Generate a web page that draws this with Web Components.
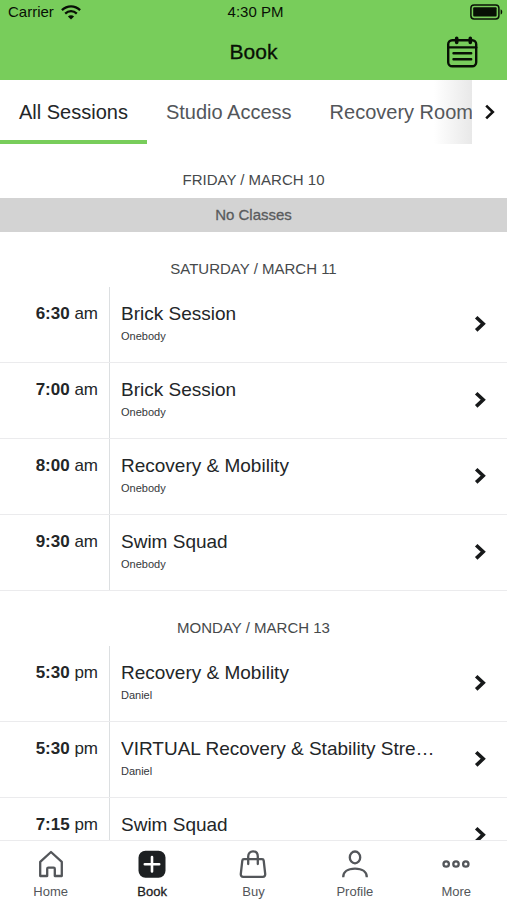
<!DOCTYPE html>
<html lang="en">
<head>
<meta charset="utf-8">
<meta name="viewport" content="width=device-width, initial-scale=1">
<title>Book</title>
<style>
html, body { height: 100%; }
body { margin: 0; background: #fff; color: #232628; font-family: "Liberation Sans", Arial, sans-serif; --brand: #78cd5b; --muted: #53565a; --line: #ebebed; }
</style>
</head>
<body>
<booking-app>
  <status-bar slot="top" carrier="Carrier" time="4:30 PM"></status-bar>
  <title-bar slot="top">Book</title-bar>
  <session-tabs slot="top">
    <session-tab selected>All Sessions</session-tab>
    <session-tab>Studio Access</session-tab>
    <session-tab>Recovery Room</session-tab>
  </session-tabs>
  <day-group date="FRIDAY / MARCH 10"><empty-day>No Classes</empty-day></day-group>
  <day-group date="SATURDAY / MARCH 11">
    <class-row time="6:30" period="am" coach="Onebody">Brick Session</class-row>
    <class-row time="7:00" period="am" coach="Onebody">Brick Session</class-row>
    <class-row time="8:00" period="am" coach="Onebody">Recovery &amp; Mobility</class-row>
    <class-row time="9:30" period="am" coach="Onebody">Swim Squad</class-row>
  </day-group>
  <day-group date="MONDAY / MARCH 13">
    <class-row time="5:30" period="pm" coach="Daniel">Recovery &amp; Mobility</class-row>
    <class-row time="5:30" period="pm" coach="Daniel">VIRTUAL Recovery &amp; Stability Stre…</class-row>
    <class-row time="7:15" period="pm" coach="Daniel">Swim Squad</class-row>
  </day-group>
  <bottom-nav slot="bottom">
    <nav-item icon="home">Home</nav-item>
    <nav-item icon="book" selected>Book</nav-item>
    <nav-item icon="buy">Buy</nav-item>
    <nav-item icon="profile">Profile</nav-item>
    <nav-item icon="more">More</nav-item>
  </bottom-nav>
</booking-app>
<script>
const BASE = `<style>
*{box-sizing:border-box}
:host{display:block}
svg{display:block;flex:none}
a{color:inherit;text-decoration:none}
button{font:inherit;color:inherit;border:0;background:none;padding:0;margin:0}
</style>`;
function element(name, render) {
  customElements.define(name, class extends HTMLElement {
    constructor() {
      super();
      this.attachShadow({ mode: 'open' });
    }
    connectedCallback() {
      this.shadowRoot.innerHTML = BASE + render(this);
    }
  });
}

element('booking-app', () => `<style>
:host{display:flex;flex-direction:column;height:100vh;overflow:hidden}
main{flex:1;min-height:0;overflow:hidden}
</style><slot name="top"></slot><main><slot></slot></main><slot name="bottom"></slot>`);

element('status-bar', el => `<style>
:host{background:var(--brand);color:#081005}
div{display:grid;grid-template-columns:1fr auto 1fr;align-items:center;height:24px;padding:0 4px 0 8px;font-size:15px;line-height:24px}
.left{display:flex;align-items:center;gap:7px}
.battery{justify-self:end}
</style><div>
<span class="left"><span>${el.getAttribute('carrier')}</span>
<svg width="20" height="15" viewBox="0 0 20 15" fill="none" stroke="currentColor" stroke-width="2.3" aria-hidden="true"><path d="M.9 5.2C6.2.1 13.8.1 19.1 5.2"/><path d="M4.2 8.6c3.4-3.2 8.2-3.2 11.6 0"/><path d="M6.9 11.4c1.8-1.7 4.4-1.7 6.2 0L10 14.6z" fill="currentColor" stroke="none"/></svg></span>
<span>${el.getAttribute('time')}</span>
<svg class="battery" width="33" height="16" viewBox="0 0 33 16" aria-hidden="true"><rect x=".9" y=".9" width="28" height="14" rx="3.2" fill="none" stroke="currentColor" stroke-width="1.5"/><rect x="3.2" y="3.2" width="23.4" height="9.4" rx="1" fill="currentColor"/><path d="M30.6 5.2c2.2.6 2.2 4.8 0 5.4z" fill="currentColor"/></svg>
</div>`);

element('title-bar', () => `<style>
:host{background:var(--brand);color:#081005}
header{display:grid;grid-template-columns:1fr auto 1fr;align-items:center;height:56px;padding:0 29px}
h1{margin:0;font-size:21px;line-height:28px;font-weight:400;-webkit-text-stroke:.3px currentColor}
button{justify-self:end}
</style><header><span></span><h1><slot></slot></h1>
<button type="button" aria-label="Calendar"><svg width="32" height="32" viewBox="0 0 32 32" fill="none" stroke="currentColor" stroke-width="2.4" stroke-linecap="round"><rect x="2.2" y="4.3" width="28" height="26" rx="4"/><path d="M2.2 11.4h28"/><path d="M10.7 2.200v4.200M24.300 2.200v4.200" stroke-width="3.600"/><path d="M7.500 17.200h17.700M7.500 23.200h17.700"/></svg></button></header>`);

element('session-tabs', () => `<style>
nav{display:flex;height:64px;background:#fff}
.strip{position:relative;display:flex;flex:1;min-width:0;overflow:hidden}
.strip::after{content:"";position:absolute;top:0;right:0;bottom:0;width:38px;background:linear-gradient(to right,rgba(120,120,120,0),rgba(120,120,120,.17));pointer-events:none}
button{display:flex;align-items:center;justify-content:center;width:35px;color:#111}
</style><nav aria-label="Session types"><div class="strip"><slot></slot></div>
<button type="button" aria-label="More session types"><svg width="12" height="16" viewBox="0 0 12 16" fill="none" stroke="currentColor" stroke-width="2.6"><path d="M2.2 1.6 8.8 8l-6.6 6.4"/></svg></button></nav>`);

element('session-tab', () => `<style>
:host{flex:none}
a{display:block;height:64px;padding:0 19px;font-size:20px;line-height:64px;white-space:nowrap;color:var(--muted)}
:host([selected]) a{color:#232628;border-bottom:4px solid var(--brand)}
</style><a href="#sessions"><slot></slot></a>`);

element('day-group', el => `<style>
section{padding-top:1px}
:host(:first-child) section,:host([date^="FRIDAY"]) section{padding-top:0}
h2{margin:0;height:54px;padding-top:8px;text-align:center;font-size:15px;line-height:56px;font-weight:400;color:#46494b}
</style><section><h2>${el.getAttribute('date')}</h2><slot></slot></section>`);

element('empty-day', () => `<style>
p{margin:0;height:34px;background:#d3d3d3;text-align:center;font-size:15px;line-height:34px;color:#595b5d;-webkit-text-stroke:.3px currentColor}
</style><p><slot></slot></p>`);

element('class-row', el => `<style>
a{display:flex;height:76px;border-bottom:1px solid var(--line)}
.time{width:110px;padding:15px 11px 0 0;border-right:1px solid #dcdfe1;text-align:right;font-size:17px;line-height:24px;white-space:nowrap}
.info{flex:1;min-width:0;padding:15px 0 0 11px}
h3{margin:0;font-size:19px;line-height:24px;font-weight:400;white-space:nowrap;overflow:hidden;text-overflow:ellipsis}
p{margin:2px 0 0;font-size:11px;line-height:16px;color:#34373a}
svg{margin:28px 20px 0}
</style><a href="#class"><span class="time"><b>${el.getAttribute('time')}</b> ${el.getAttribute('period')}</span>
<div class="info"><h3><slot></slot></h3><p>${el.getAttribute('coach')}</p></div>
<svg width="13" height="18" viewBox="0 0 13 18" fill="none" stroke="#17191a" stroke-width="3.6" aria-hidden="true"><path d="M2.2 2.2 9.2 8.8l-7 6.6"/></svg></a>`);

element('bottom-nav', () => `<style>
nav{display:grid;grid-template-columns:repeat(5,1fr);height:60px;background:#fff;border-top:1px solid var(--line)}
</style><nav aria-label="Main"><slot></slot></nav>`);

const ICONS = {
  home: '<path d="M4.2 27V12.8L15 3l10.8 9.8V27h-7v-7.2c0-.7-.5-1.2-1.2-1.2h-5.200c-.7 0-1.200.5-1.200 1.200V27z"/>',
  book: '<rect x="1.500" y="1.700" width="27" height="27" rx="7" fill="#1d2022" stroke="none"/><path d="M15 8v14.400M7.800 15.200h14.400" stroke="#fff" stroke-width="2.600" stroke-linecap="round"/>',
  buy: '<path d="M5.900 10.200h18.200c.9 0 1.500.5 1.600 1.400l1.500 13.200c.2 1.800-.7 3-2.400 3H5.200c-1.700 0-2.600-1.200-2.400-3l1.500-13.200c.1-.9.7-1.400 1.600-1.400z"/><path d="M10.200 15V7.500C10.200 4.300 12.200 2.300 15 2.300s4.800 2 4.800 5.200V15" stroke-linecap="round"/>',
  profile: '<ellipse cx="15" cy="8.400" rx="5.200" ry="5.900"/><path d="M3.200 28.200c0-5.200 4.400-8.600 11.800-8.600s11.800 3.400 11.800 8.600"/>',
  more: '<circle cx="5.200" cy="15" r="2.700"/><circle cx="15" cy="15" r="2.700"/><circle cx="24.800" cy="15" r="2.700"/>'
};
element('nav-item', el => `<style>
a{display:flex;flex-direction:column;align-items:center;gap:5px;padding-top:8px;font-size:13px;line-height:16px;color:var(--muted)}
:host([selected]) a{color:#1d2022;-webkit-text-stroke:.3px currentColor}
</style><a href="#${el.getAttribute('icon')}"><svg width="30" height="30" viewBox="0 0 30 30" fill="none" stroke="currentColor" stroke-width="2.3" stroke-linejoin="round" aria-hidden="true">${ICONS[el.getAttribute('icon')]}</svg><span><slot></slot></span></a>`);
</script>
</body>
</html>
